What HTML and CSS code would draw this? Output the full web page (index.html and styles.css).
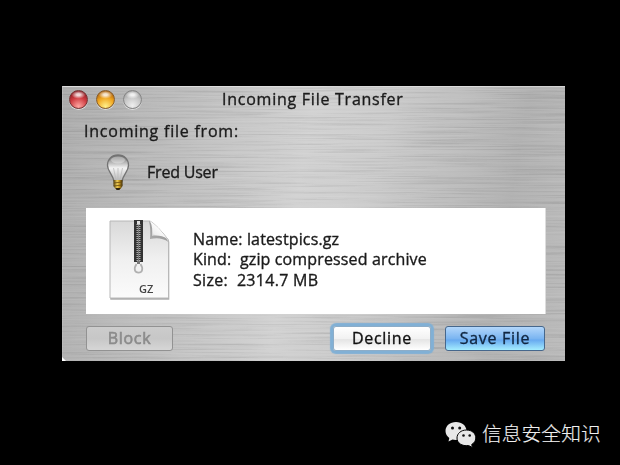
FILE: index.html
```html
<!DOCTYPE html>
<html lang="en">
<head>
<meta charset="utf-8">
<title>Incoming File Transfer</title>
<link rel="stylesheet" href="styles.css">
</head>
<body>
<main class="window">
  <svg class="metal" width="503" height="275" aria-hidden="true">
    <filter id="brushed" x="0" y="0" width="100%" height="100%" color-interpolation-filters="sRGB">
      <feTurbulence type="fractalNoise" baseFrequency="0.009 0.6" numOctaves="3" seed="8"/>
      <feColorMatrix values="1 0 0 0 0  1 0 0 0 0  1 0 0 0 0  0 0 0 0 0.12"/>
    </filter>
    <rect width="503" height="275" filter="url(#brushed)"/>
    <path d="M0 271L4 275H0Z" fill="#fff"/>
  </svg>
  <header class="titlebar">
    <div class="lights"><i class="light red"></i><i class="light amber"></i><i class="light clear"></i></div>
    <h1 class="title">Incoming File Transfer</h1>
  </header>
  <p class="from">Incoming file from:</p>
  <div class="sender">
    <svg class="bulb" width="26" height="38" viewBox="0 0 26 38" aria-hidden="true">
      <defs>
        <linearGradient id="glass" x1="0" y1="0" x2="0" y2="1"><stop offset="0" stop-color="#666"/><stop offset=".28" stop-color="#b5b5b5"/><stop offset=".5" stop-color="#f4f4f4"/><stop offset="1" stop-color="#b5b5b5"/></linearGradient>
        <linearGradient id="brass"><stop stop-color="#4f3c0d"/><stop offset=".4" stop-color="#f1cf58"/><stop offset=".65" stop-color="#c39622"/><stop offset="1" stop-color="#3c2b08"/></linearGradient>
      </defs>
      <path d="M13 2C6.500 2 2.500 6.600 2.500 12.300C2.500 18 7.500 21 9 28H17C18.500 21 23.500 18 23.500 12.300C23.500 6.600 19.500 2 13 2Z" fill="url(#glass)" stroke="#737373" stroke-width="1.300"/>
      <ellipse cx="13" cy="7" rx="7" ry="3.500" fill="#fff" opacity=".35"/>
      <path d="M11 27L8.500 15M13 27V15M15 27L17.500 15" fill="none" stroke="#bbb" stroke-width=".8"/>
      <path d="M8.500 27H17.500V33L15.500 36H10.500L8.500 33Z" fill="url(#brass)"/>
      <path d="M8.500 30L17.500 29M8.500 33L17.500 32" stroke="#66490f" stroke-width=".8"/>
      <path d="M10.500 35H15.500L14.500 37H11.500Z" fill="#302410"/>
    </svg>
    <span class="name">Fred User</span>
  </div>
  <section class="panel">
    <svg class="doc" width="64" height="84" viewBox="0 0 64 84" aria-hidden="true">
      <defs>
        <linearGradient id="paper" x1="0" y1="0" x2="0" y2="1"><stop stop-color="#d9d9d9"/><stop offset=".5" stop-color="#f0f0f0"/><stop offset="1" stop-color="#fbfbfb"/></linearGradient>
        <linearGradient id="fold" x1="0" y1="1" x2=".6" y2=".3"><stop stop-color="#aaa"/><stop offset=".4" stop-color="#eee"/><stop offset="1" stop-color="#fff"/></linearGradient>
        <linearGradient id="foldShade" x1="1" y1="0" x2="0" y2="1"><stop stop-color="#777"/><stop offset="1" stop-color="#999"/></linearGradient>
      </defs>
      <path d="M3 3H43L62 22V80H3Z" fill="#777" opacity=".6" transform="translate(.3 .8)"/>
      <path d="M3 2H43Q50 6 61.500 21V79H3Z" fill="url(#paper)" stroke="#b8b8b8"/>
      <path d="M42 2C43.500 8 43.500 14 43 20C50 18.500 56 19 61.500 23L56 14Z" fill="url(#foldShade)" opacity=".75"/>
      <path d="M43 2C45.500 7 45.500 12 45 17C50 16 56 17 60 19.500Q52 8 43 2Z" fill="url(#fold)"/>
      <rect x="27" y="1" width="9" height="42" fill="#333"/>
      <path d="M31.500 5V42" stroke="#b5b5b5" stroke-width="4" stroke-dasharray="1 1"/>
      <path d="M31.500 6V42" stroke="#777" stroke-width="1.300"/>
      <path d="M30 2H33V5H30Z" fill="#ddd"/>
      <path d="M31.500 42V47" stroke="#777" stroke-width="3"/>
      <path d="M29.500 45C27.500 48 27.500 50 28 51.500C29 54.300 34 54.300 35 51.500C35.500 50 35.500 48 33.500 45" fill="#f2f2f2" stroke="#b0b0b0" stroke-width="1.800"/>
      <text class="ext" x="32" y="73.500">GZ</text>
    </svg>
    <div class="details">
      <p>Name: latestpics.gz</p>
      <p>Kind:&nbsp; gzip compressed archive</p>
      <p class="size">Size:&nbsp; 2314.7 MB</p>
    </div>
  </section>
  <footer class="actions">
    <button class="btn block" disabled>Block</button>
    <button class="btn decline">Decline</button>
    <button class="btn save">Save File</button>
  </footer>
</main>
<div class="credit">
  <svg width="32" height="27" viewBox="0 0 32 27" aria-hidden="true">
    <path d="M11 1C5 1 .5 4.800 .5 10C.5 13 2 15.300 4.300 17L3.500 20.500L7.500 18.500C13 20 21.500 17 21.500 10C21.500 4.800 17 1 11 1Z" fill="#e8e8e8"/>
    <path d="M21.500 9C16 9 12 12.500 12 17C12 22 17 25.500 23.500 24.500L27.500 26.500L26.700 23.500C29.200 22 30.800 19.800 30.800 17C30.800 12.500 27 9 21.500 9Z" fill="#e8e8e8" stroke="#000"/>
    <g fill="#111"><circle cx="7.500" cy="7" r="1.500"/><circle cx="14.700" cy="7" r="1.500"/><circle cx="18.500" cy="14.500" r="1.300"/><circle cx="24.700" cy="14.500" r="1.300"/></g>
  </svg>
  <span class="label" lang="zh-CN">信息安全知识</span>
</div>
</body>
</html>
```
FILE: styles.css
```css
* { box-sizing: border-box; }
body {
  margin: 0;
  width: 620px;
  height: 465px;
  padding: 86px 0 0 62px;
  overflow: hidden;
  background: #000;
  color: #1b1b1b;
  font: 500 16px/20px "Open Sans", "Noto Sans", sans-serif;
}
p, h1 { margin: 0; white-space: pre; }
.window {
  position: relative;
  isolation: isolate;
  width: 503px;
  height: 275px;
  border-top: 1px solid #ddd;
  border-left: 1px solid #bbb;
  background: linear-gradient(100deg, #adadad 0%, #bcbcbc 20%, #d2d2d2 46%, #cbcbcb 60%, #b2b2b2 85%, #bbb 100%);
  -webkit-text-stroke: .35px;
}
.metal {
  position: absolute;
  z-index: -1;
  left: -1px;
  top: -1px;
  mix-blend-mode: hard-light;
}
.titlebar { display: flex; height: 24px; padding: 2px 0 0 6px; }
.lights { display: flex; gap: 8px; width: 153px; padding-top: 1px; }
.light {
  width: 19px;
  height: 19px;
  border: 1px solid #777;
  border-radius: 50%;
  box-shadow: 0 1px 0 #ddd;
}
.red { border-color: #733; background: radial-gradient(7px 4px at 50% 22%, #fffc 0 25%, transparent), radial-gradient(circle at 50% 90%, #ffa6a1, #cf3d42 50%, #8e1a22 85%); }
.amber { border-color: #865c2a; background: radial-gradient(7px 4px at 50% 22%, #fffc 0 25%, transparent), radial-gradient(circle at 50% 90%, #fff08a, #f0a620 50%, #ac600c 85%); }
.clear { border-color: #858585; background: radial-gradient(7px 4px at 50% 22%, #fffc 0 25%, transparent), radial-gradient(circle at 50% 85%, #eee, #c7c7c7 50%, #999 90%); }
.title { font-size: 16px; font-weight: 500; line-height: 20px; letter-spacing: .75px; }
.from { height: 40px; padding: 10px 0 0 21px; letter-spacing: .77px; }
.sender { display: flex; height: 57px; padding: 2px 0 0 42px; }
.bulb { margin-right: 16px; }
.name { padding-top: 9px; letter-spacing: -.2px; }
.panel {
  display: flex;
  width: 460px;
  height: 106px;
  margin-left: 23px;
  padding: 11px 0 0 21px;
  border-right: 1px solid #ddd;
  background: #fff;
}
.ext { font: 600 11px "Open Sans", sans-serif; fill: #444; -webkit-text-stroke: 0; }
.details { padding: 10px 0 0 22px; line-height: 20.4px; letter-spacing: .14px; }
.size { letter-spacing: .3px; }
.actions { display: flex; height: 48px; padding: 12px 0 0 23px; }
.btn {
  height: 25px;
  padding: 0 0 1px;
  border: 1px solid #777;
  border-radius: 3px;
  color: #111;
  font: 500 16px/22px "Open Sans", "Noto Sans", sans-serif;
  letter-spacing: .7px;
}
.block { width: 87px; border-color: #929292; background: linear-gradient(#ccc, #c7c7c7 50%, #d6d6d6); color: #8b8b8b; -webkit-text-stroke: .6px; }
.decline {
  width: 98px;
  margin: 0 15px 0 160px;
  border-color: #8dadc8;
  background: linear-gradient(#fff, #f2f2f2 50%, #e5e5e5 55%, #fff);
  box-shadow: 0 0 1px 3px #81b0d5;
}
.save { width: 100px; margin-left: -1px; border-color: #46678c; background: linear-gradient(#b3d7fb, #7bb5f1 50%, #68aaf0 57%, #a4edff); color: #102640; }
.credit {
  display: flex;
  gap: 5px;
  margin: 60px 0 0 383px;
  color: #f0f0f0;
  font: 300 19.8px/23px "Noto Sans CJK SC", sans-serif;
}
.label { -webkit-text-stroke: .15px; }
```
